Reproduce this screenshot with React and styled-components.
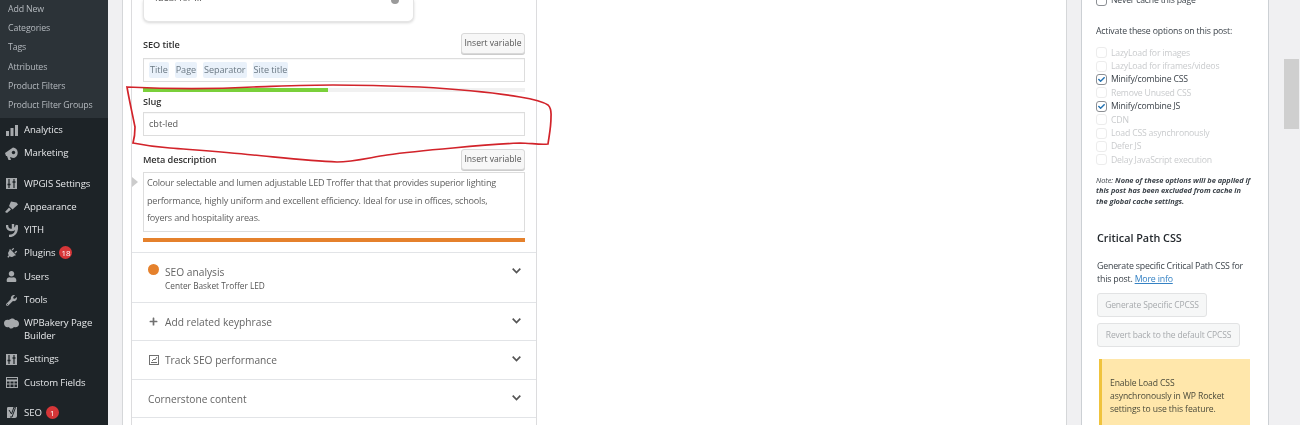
import React from 'react';
import styled, { createGlobalStyle } from 'styled-components';
import { FaPlug, FaUser, FaWrench, FaPlus, FaCheck } from 'react-icons/fa';

const Global = createGlobalStyle`
  html, body { margin: 0; padding: 0; background: #f0f0f2; }
  * { box-sizing: border-box; }
  body { font-family: "Open Sans", "Noto Sans", sans-serif; color: #444; }
`;
const Page = styled.div`
  position: relative; width: 1300px; height: 425px; overflow: hidden;
  display: grid; grid-template-columns: 108px 14px 945px 14px 188px 1fr; background: #f0f0f2;
  filter: blur(0.35px);
`;
const Sidebar = styled.nav`background: #1d2327; height: 425px; overflow: hidden;`;
const Submenu = styled.ul`
  list-style: none; margin: 0; padding: 0; height: 118px; background: #2c3338;
  display: flex; flex-direction: column;
`;
const SubItem = styled.li`
  height: 19.2px; line-height: 19.2px; padding-left: 8px; font-size: 8.8px; color: #b4b9be; white-space: nowrap; letter-spacing: -.15px;
`;
const Menu = styled.ul`list-style: none; margin: 0; padding: 1px 0 0;`;
const MenuItem = styled.li`
  display: flex; align-items: flex-start; min-height: 23.3px; padding: 4px 0 ${p => p.$wrap ? 6 : 0}px; margin-top: ${p => p.$gap || 0}px;
  font-size: 9.6px; line-height: 13px; color: #e4e6e8; letter-spacing: -.1px;
`;
const IconSlot = styled.span`
  width: 24px; flex: none; display: flex; justify-content: center; color: #a7aaad; height: 14px; align-items: center; padding-right: 1px;
  svg { display: block; }
`;
const Label = styled.span`width: 78px;`;
const Count = styled.span`
  display: inline-block; min-width: 13px; height: 13px; line-height: 13px; border-radius: 7px; background: #d63638; color: #fff;
  font-size: 8px; text-align: center; margin-left: 4px; padding: 0 2px; vertical-align: top;
`;
const Main = styled.main`background: #fff; border-left: 1px solid #d5d7d9; border-right: 1px solid #d5d7d9; height: 425px; padding-left: 8px; overflow: hidden;`;
const Yoast = styled.section`width: 406px; height: 425px; border-left: 1px solid #dcdcde; border-right: 1px solid #dcdcde; position: relative; overflow: hidden;`;
const Fields = styled.div`height: 252px; padding: 0 11px;`;
const SnippetCard = styled.div`
  width: 271px; height: 22px; background: #fff; border: 1px solid #e5e5e5; border-top: 0; border-radius: 0 0 6px 6px;
  box-shadow: 0 1px 3px rgba(0,0,0,.16); display: flex; justify-content: space-between; padding: 0 14px 0 11px; overflow: hidden;
`;
const Clipped = styled.div`font-size: 9.5px; color: #555; line-height: 10px; margin-top: -7px;`;
const Eye = styled.span`width: 8px; height: 4px; border-radius: 0 0 5px 5px; background: #9a9a9a;`;
const FieldHead = styled.div`display: flex; justify-content: space-between; align-items: center; height: 20px; margin-top: ${p => p.$top}px;`;
const FieldLabel = styled.label`font-size: 9.2px; font-weight: 600; color: #303030; letter-spacing: -.1px; padding-top: ${p => p.$pad ?? 2}px;`;
const SlugLabel = styled(FieldLabel).attrs({ as: 'div' })`display: block; margin-top: 3px; padding-top: 0; height: 17px; line-height: 14px;`;
const VarButton = styled.button`
  width: 64px; height: 21px; padding: 0; background: #f7f7f7; border: 1px solid #d9d9d9; border-radius: 3px; box-shadow: 0 1px 0 #ccc;
  font: 8.6px "Open Sans", sans-serif; color: #555;
`;
const InputBox = styled.div`
  height: ${p => p.$h}px; margin-top: ${p => p.$top}px; border: 1px solid #ddd; background: #fff; display: flex; align-items: center; gap: 6px; padding: 0 5px;
  font-size: 9.1px; color: #555; box-shadow: inset 0 1px 1px rgba(0,0,0,.03);
`;
const Chip = styled.span`background: #e9f1fa; padding: 0 1px; height: 16px; line-height: 16px; color: #6a7883; border-radius: 2px; letter-spacing: -.05px;`;
const Slug = styled.span`padding-left: 0; margin-top: -1px;`;
const TextArea = styled.div`
  height: 60px; margin-top: 3px; border: 1px solid #ddd; padding: 1px 3px; font-size: 9.1px; line-height: 17.5px; color: #5f5f5f; white-space: nowrap; letter-spacing: -.21px;
`;
const Progress = styled.div`height: 4px; margin-top: ${p => p.$top}px; background: #f1f1f1;`;
const ProgressFill = styled.div`height: 100%; background: ${p => p.$color};`;
const Marker = styled.span`
  position: absolute; left: 0; top: 177px; width: 0; height: 0; border-left: 6px solid #ccc; border-top: 5px solid transparent; border-bottom: 5px solid transparent;
`;
const Row = styled.div`
  height: ${p => p.$h}px; border-top: 1px solid #e2e4e7; display: flex; justify-content: space-between; align-items: flex-start; padding: ${p => p.$pad}px 15px 0 16px;
`;
const RowMain = styled.div`display: flex; align-items: flex-start; gap: 6px;`;
const RowIcon = styled.span`width: 11px; height: 11px; display: flex; align-items: center; justify-content: center; flex: none; color: #707070; margin-top: 1px;`;
const Dot = styled.span`width: 11px; height: 11px; border-radius: 50%; background: #e5812c; margin-top: -1px; flex: none;`;
const RowTitle = styled.div`font-size: 10.2px; line-height: 14px; color: #646464;`;
const RowSub = styled.div`font-size: 8.3px; line-height: 14px; color: #555;`;
const Chevron = styled.svg`width: 9px; height: 6px; margin-top: 3px; fill: none; stroke: #555; stroke-width: 1.7;`;
const Side = styled.aside`
  background: #fff; border-left: 1px solid #ccd0d4; border-right: 1px solid #ccd0d4; height: 425px; padding: 0 14px; overflow: hidden;
`;
const Check = styled.div`
  display: flex; align-items: center; gap: 4px; height: ${p => p.$h || 13.4}px; font-size: 8.7px; letter-spacing: -.2px; color: ${p => p.$off ? '#c9cbcd' : '#3c434a'}; white-space: nowrap;
`;
const Box = styled.span`
  width: 11px; height: 11px; flex: none; border: 1px solid ${p => p.$off ? '#ececec' : '#8c8f94'}; border-radius: 3px; background: #fff; display: flex; align-items: center; justify-content: center; color: #2271b1;
`;
const Topline = styled.div`margin-top: -6px;`;
const Activate = styled.p`margin: 19px 0 9px; font-size: 8.7px; line-height: 12px; color: #3c434a; letter-spacing: -.15px;`;
const Note = styled.p`margin: 8px 0 0; font-size: 7.4px; line-height: 10.7px; font-style: italic; color: #3c434a; letter-spacing: -.03px; strong { font-weight: 700; }`;
const Heading = styled.h3`margin: 23px 0 0 1px; font-size: 10.8px; line-height: 16px; font-weight: 600; color: #23282d;`;
const Para = styled.p`margin: 14px 0 0 1px; font-size: 8.8px; line-height: 13px; color: #3c434a; width: 160px; letter-spacing: -.2px; a { color: #3582c4; text-decoration: underline; }`;
const Disabled = styled.button`
  display: block; height: 24px; width: ${p => p.$w}px; margin: ${p => p.$top}px 0 0 1px; padding: 0; background: #f6f7f7; border: 1px solid #e2e3e4; border-radius: 3px;
  font: 8.5px "Open Sans", sans-serif; color: #a7aaad; white-space: nowrap; letter-spacing: -.12px;
`;
const Notice = styled.div`
  margin: 12px 0 0 3px; width: 151px; height: 70px; background: #ffe7ab; border-left: 3px solid #f0c33c; padding: 18px 24px 0 8px; font-size: 8.6px; line-height: 13px; color: #4a4a3a; letter-spacing: -.1px;
`;
const Rail = styled.div`background: #f0f0f2; display: flex; justify-content: flex-end; padding: 59px 1px 0 0;`;
const Thumb = styled.div`width: 15px; height: 70px; background: #cfcfcf;`;
const Ink = styled.svg`position: absolute; left: 0; top: 0; pointer-events: none; fill: none; stroke: #d2232a; stroke-width: 1.7;`;

const Ic = {
  bars: <svg width="12" height="11" viewBox="0 0 12 11" fill="#a7aaad"><rect x="0" y="6" width="3" height="5"/><rect x="4.5" y="3" width="3" height="8"/><rect x="9" y="0" width="3" height="11"/></svg>,
  megaphone: <svg width="13" height="13" viewBox="0 0 13 13" fill="#a7aaad"><path d="M0 6l8-5.500a4.500 5 0 0 1 0 10.500L5 10l1 3H3.500L2 9H1z"/><circle cx="8.500" cy="5.500" r="1.700" fill="#1d2327"/></svg>,
  brush: <svg width="13" height="13" viewBox="0 0 13 13" fill="#a7aaad"><path d="M6 1.500l5.500 1 1.500 2-5.500 5-3.500-3.500z"/><path d="M4 7.500l2 2-4 3.500-2-1z"/></svg>,
  sliders: <svg width="11" height="11" viewBox="0 0 11 11"><rect width="11" height="11" fill="#a7aaad"/><path d="M3 1v9M8 1v9" stroke="#1d2327" strokeWidth="1.200"/><path d="M1.500 6.500h3M6.500 4h3" stroke="#1d2327" strokeWidth="1.400"/></svg>,
  yith: <svg width="12" height="14" viewBox="0 0 12 14" fill="none" stroke="#a7aaad" strokeWidth="2.400"><path d="M1 2c0 4 2 5 4 5s5-1 6-5M7 1c0 2 0 4 0 6M11 3c0 7-3 10-8 10"/></svg>,
  cloud: <svg width="15" height="11" viewBox="0 0 15 11" fill="#a7aaad"><path d="M0 5c0-3 3-4 5-3 2-2 5-2 6 0 3 0 4 2 4 4s-2 4-5 3c-2 2-4 2-5 0-3 1-5-1-5-4z"/></svg>,
  table: <svg width="12" height="11" viewBox="0 0 12 11" fill="none" stroke="#a7aaad"><rect x=".5" y=".5" width="11" height="10"/><path d="M.5 3.500h11" strokeWidth="2"/><path d="M.5 7h11M4 4v6.500M8 4v6.500"/></svg>,
  yoast: <svg width="12" height="13" viewBox="0 0 12 13"><path d="M2 1h9v9c0 1-1 2-2 2H1V3c0-1 0-2 1-2z" fill="#a7aaad"/><path d="M3 4l2.500 4L8 1l1.500.5L6 11H4" fill="none" stroke="#1d2327" strokeWidth="1"/></svg>,
  chart: <svg width="10" height="10" viewBox="0 0 10 10" fill="none" stroke="#707070"><rect x=".5" y=".5" width="9" height="9"/><path d="M2 7.500h6M3 6l2-2 1 1 2-3" /></svg>,
};

const More = () => <Chevron viewBox="0 0 9 6"><path d="M.7.7l3.800 3.800L8.300.7"/></Chevron>;

const menu = [
  [Ic.bars, 'Analytics'],
  [Ic.megaphone, 'Marketing'],
  [Ic.sliders, 'WPGIS Settings', 7],
  [Ic.brush, 'Appearance'],
  [Ic.yith, 'YITH'],
  [<FaPlug size={11} style={{ transform: 'rotate(45deg)' }} />, 'Plugins', 0, 18],
  [<FaUser size={11} />, 'Users'],
  [<FaWrench size={11} />, 'Tools'],
  [Ic.cloud, 'WPBakery Page Builder', 0, 0, true],
  [Ic.sliders, 'Settings'],
  [Ic.table, 'Custom Fields'],
  [Ic.yoast, 'SEO', 7, 1],
];
const opts = [
  ['LazyLoad for images', 1], ['LazyLoad for iframes/videos', 1], ['Minify/combine CSS', 0], ['Remove Unused CSS', 1],
  ['Minify/combine JS', 0], ['CDN', 1], ['Load CSS asynchronously', 1], ['Defer JS', 1], ['Delay JavaScript execution', 1],
];

export default function App() {
  return (
    <Page>
      <Global />
      <Sidebar>
        <Submenu>
          {['Add New', 'Categories', 'Tags', 'Attributes', 'Product Filters', 'Product Filter Groups'].map(t => <SubItem key={t}>{t}</SubItem>)}
        </Submenu>
        <Menu>
          {menu.map(([icon, text, gap, count, wrap]) => (
            <MenuItem key={text} $gap={gap} $wrap={wrap}>
              <IconSlot>{icon}</IconSlot>
              <Label>{text}{count ? <Count>{count}</Count> : null}</Label>
            </MenuItem>
          ))}
        </Menu>
      </Sidebar>
      <div />
      <Main>
        <Yoast>
          <Marker />
          <Fields>
            <SnippetCard><Clipped>Ideal for ...</Clipped><Eye /></SnippetCard>
            <FieldHead $top={11}><FieldLabel>SEO title</FieldLabel><VarButton>Insert variable</VarButton></FieldHead>
            <InputBox $h={24} $top={5}><Chip>Title</Chip><Chip>Page</Chip><Chip>Separator</Chip><Chip>Site title</Chip></InputBox>
            <Progress $top={6}><ProgressFill $color="#7ad03a" style={{ width: '48.5%' }} /></Progress>
            <SlugLabel>Slug</SlugLabel>
            <InputBox $h={24} $top={0}><Slug>cbt-led</Slug></InputBox>
            <FieldHead $top={13}><FieldLabel $pad={0}>Meta description</FieldLabel><VarButton>Insert variable</VarButton></FieldHead>
            <TextArea>Colour selectable and lumen adjustable LED Troffer that that provides superior lighting<br />performance, highly uniform and excellent efficiency. Ideal for use in offices, schools,<br />foyers and hospitality areas.</TextArea>
            <Progress $top={6}><ProgressFill $color="#e5812c" style={{ width: '100%' }} /></Progress>
          </Fields>
          <Row $h={50} $pad={12}>
            <RowMain><Dot /><div><RowTitle>SEO analysis</RowTitle><RowSub>Center Basket Troffer LED</RowSub></div></RowMain>
            <More />
          </Row>
          <Row $h={38} $pad={12}><RowMain><RowIcon><FaPlus size={9} /></RowIcon><RowTitle>Add related keyphrase</RowTitle></RowMain><More /></Row>
          <Row $h={39} $pad={12}><RowMain><RowIcon>{Ic.chart}</RowIcon><RowTitle>Track SEO performance</RowTitle></RowMain><More /></Row>
          <Row $h={38} $pad={12}><RowTitle>Cornerstone content</RowTitle><More /></Row>
          <Row $h={10} $pad={0} />
        </Yoast>
      </Main>
      <div />
      <Side>
        <Topline><Check $h={12}><Box />Never cache this page</Check></Topline>
        <Activate>Activate these options on this post:</Activate>
        {opts.map(([t, off]) => <Check key={t} $off={off}><Box $off={off}>{off ? null : <FaCheck size={7} />}</Box>{t}</Check>)}
        <Note>Note: <strong>None of these options will be applied if this post has been excluded from cache in the global cache settings.</strong></Note>
        <Heading>Critical Path CSS</Heading>
        <Para>Generate specific Critical Path CSS for this post. <a href="#more">More info</a></Para>
        <Disabled $w={110} $top={7}>Generate Specific CPCSS</Disabled>
        <Disabled $w={143} $top={6}>Revert back to the default CPCSS</Disabled>
        <Notice>Enable Load CSS asynchronously in WP Rocket settings to use this feature.</Notice>
      </Side>
      <Rail><Thumb /></Rail>
      <Ink width="1300" height="425" viewBox="0 0 1300 425">
        <path d="M127 87C170 89 215 89 253 87C285 86 310 85 333 85C365 85 395 86 420 87C455 89 490 92 520 97C532 99 542 101 548 105C552 109 551 114 551 117C551 128 549 136 548 144C540 145 530 143 520 143C500 144 475 146 453 148C430 150 408 152 387 155C368 158 352 162 337 162C312 161 285 158 253 155C225 152 195 150 170 148C155 147 143 145 133 143C135 136 135 132 135 127C132 112 129 99 127 87Z" />
      </Ink>
    </Page>
  );
}
